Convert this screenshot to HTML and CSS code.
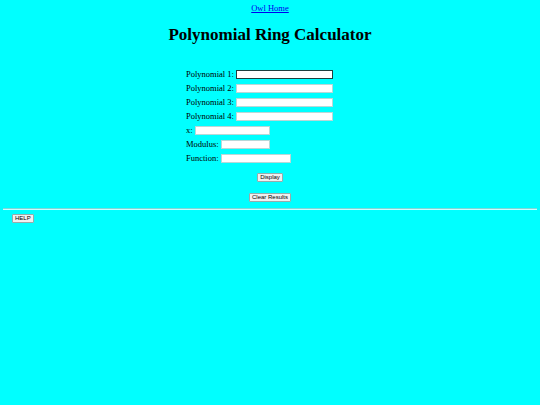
FILE: index.html
```html
<!DOCTYPE html>
<html>
<head>
<meta charset="utf-8">
<title>Polynomial Ring Calculator</title>
<link rel="stylesheet" href="styles.css">
</head>
<body>
<div class="top"><a href="#" class="home">Owl Home</a></div>
<h1 class="title">Polynomial Ring Calculator</h1>
<form class="calc">
  <div class="rows">
    <div class="row"><label>Polynomial 1:</label><input class="inp poly focus" type="text"></div>
    <div class="row"><label>Polynomial 2:</label><input class="inp poly" type="text"></div>
    <div class="row"><label>Polynomial 3:</label><input class="inp poly" type="text"></div>
    <div class="row"><label>Polynomial 4:</label><input class="inp poly" type="text"></div>
    <div class="row"><label>x:</label><input class="inp xval" type="text"></div>
    <div class="row"><label>Modulus:</label><input class="inp mod" type="text"></div>
    <div class="row"><label>Function:</label><input class="inp func" type="text"></div>
  </div>
  <div class="btnrow first"><button type="button" class="btn">Display</button></div>
  <div class="btnrow"><button type="button" class="btn">Clear Results</button></div>
</form>
<hr class="rule">
<div class="help"><button type="button" class="btn">HELP</button></div>
</body>
</html>
```
FILE: styles.css
```css
html, body {
  margin: 0;
  padding: 0;
  background: #00ffff;
}
body {
  font-family: "Liberation Serif", "Times New Roman", serif;
  font-size: 8.5px;
  color: #000;
  height: 405px;
}
.top {
  text-align: center;
  padding-top: 3px;
  line-height: 10px;
}
.home {
  color: #0000ee;
  text-decoration: underline;
}
.title {
  text-align: center;
  font-size: 17px;
  font-weight: bold;
  line-height: 22px;
  margin: 11px 0 0 0;
}
.calc {
  margin: 0;
  padding-top: 21px;
}
.rows {
  width: 168px;
  margin: 0 auto;
  display: flex;
  flex-direction: column;
}
.row {
  display: flex;
  align-items: center;
  height: 14px;
  gap: 2px;
}
.row label {
  line-height: 10px;
}
.inp {
  box-sizing: border-box;
  height: 9px;
  padding: 0;
  margin: 0;
  border: 1px solid #b8d8d8;
  background: #fff;
  font-size: 7px;
}
.inp.focus {
  border: 1px solid #1f3f3f;
}
.poly { width: 97px; }
.xval { width: 75px; }
.mod { width: 49px; }
.func { width: 70px; }
.btnrow {
  text-align: center;
  margin-top: 9px;
  height: 11px;
}
.btnrow.first {
  margin-top: 6px;
}
.btn {
  font-family: "Liberation Sans", Arial, sans-serif;
  font-size: 6px;
  line-height: 7px;
  padding: 0 2px;
  height: 9px;
  border: 1px solid #9aa;
  border-radius: 1px;
  background: #f0f0f0;
  color: #000;
}
.rule {
  margin: 6px 3px 0 3px;
  border: 0;
  border-top: 1px solid #7fd8d8;
  border-bottom: 1px solid #c8ffff;
  height: 0;
}
.help {
  padding-left: 12px;
  margin-top: 2px;
}
```
